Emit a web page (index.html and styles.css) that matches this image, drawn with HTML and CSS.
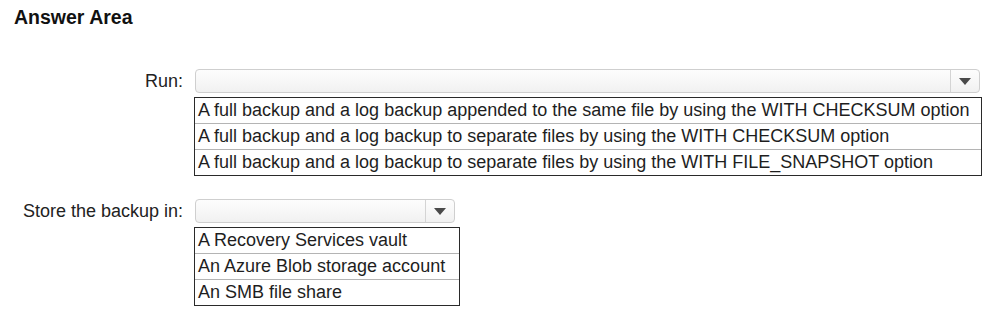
FILE: index.html
```html
<!DOCTYPE html>
<html lang="en">
<head>
    <meta charset="UTF-8">
    <title>Answer Area</title>
    <link rel="stylesheet" href="styles.css">
</head>
<body>
    <div class="answer-area">
        <h1>Answer Area</h1>

        <!-- 第一题 -->
        <div class="question q-run">
            <div class="q-label">Run:</div>
            <div class="q-field">
                <div class="select select-wide">
                    <span class="select-value"></span>
                    <span class="select-arrow">
                        <svg width="12" height="7" viewBox="0 0 12 7"><path d="M0 0H12L6 7Z" fill="#4a4a4a"/></svg>
                    </span>
                </div>
                <ul class="options options-wide">
                    <li>A full backup and a log backup appended to the same file by using the WITH CHECKSUM option</li>
                    <li>A full backup and a log backup to separate files by using the WITH CHECKSUM option</li>
                    <li>A full backup and a log backup to separate files by using the WITH FILE_SNAPSHOT option</li>
                </ul>
            </div>
        </div>

        <!-- 第二题 -->
        <div class="question q-store">
            <div class="q-label">Store the backup in:</div>
            <div class="q-field">
                <div class="select select-narrow">
                    <span class="select-value"></span>
                    <span class="select-arrow">
                        <svg width="12" height="7" viewBox="0 0 12 7"><path d="M0 0H12L6 7Z" fill="#4a4a4a"/></svg>
                    </span>
                </div>
                <ul class="options options-narrow">
                    <li>A Recovery Services vault</li>
                    <li>An Azure Blob storage account</li>
                    <li>An SMB file share</li>
                </ul>
            </div>
        </div>
    </div>
</body>
</html>
```

FILE: styles.css
```css
/* 基础样式 */
body {
    font-family: "Liberation Sans", Arial, sans-serif;
    background-color: #fff;
    color: #1e1e1e;
    margin: 0;
}

.answer-area {
    padding: 5px 0 0 14px;
}

h1 {
    font-size: 19.5px;
    font-weight: bold;
    line-height: 24px;
    margin: 0 0 40px 0;
    color: #111;
}

/* 题目行 */
.question {
    display: grid;
    grid-template-columns: 169px auto;
    column-gap: 11px;
    align-items: start;
}

.q-store {
    margin-top: 23px;
}

.q-label {
    font-size: 18px;
    line-height: 24px;
    text-align: right;
    white-space: nowrap;
    color: #222;
}

.q-field {
    display: flex;
    flex-direction: column;
    align-items: flex-start;
}

/* 下拉框 */
.select {
    display: flex;
    height: 22px;
    margin-left: 1px;
    border: 1px solid #cfcfcf;
    border-radius: 4px;
    background: linear-gradient(#fdfdfd, #f1f1f1);
}

.select-wide {
    width: 783px;
}

.select-narrow {
    width: 258px;
}

.select-value {
    flex: 1;
}

.select-arrow {
    width: 28px;
    border-left: 1px solid #d4d4d4;
    display: flex;
    align-items: center;
    justify-content: center;
}

/* 选项列表 */
.options {
    list-style: none;
    margin: 4px 0 0 0;
    padding: 0;
    border: 1px solid #2a2a2a;
}

.options-wide {
    width: 786px;
}

.options-narrow {
    width: 264px;
}

.options li {
    font-size: 18px;
    line-height: 25px;
    padding-left: 3px;
    white-space: nowrap;
    color: #1e1e1e;
    border-top: 1px solid #b4b4b4;
}

.options li:first-child {
    border-top: none;
}
```
